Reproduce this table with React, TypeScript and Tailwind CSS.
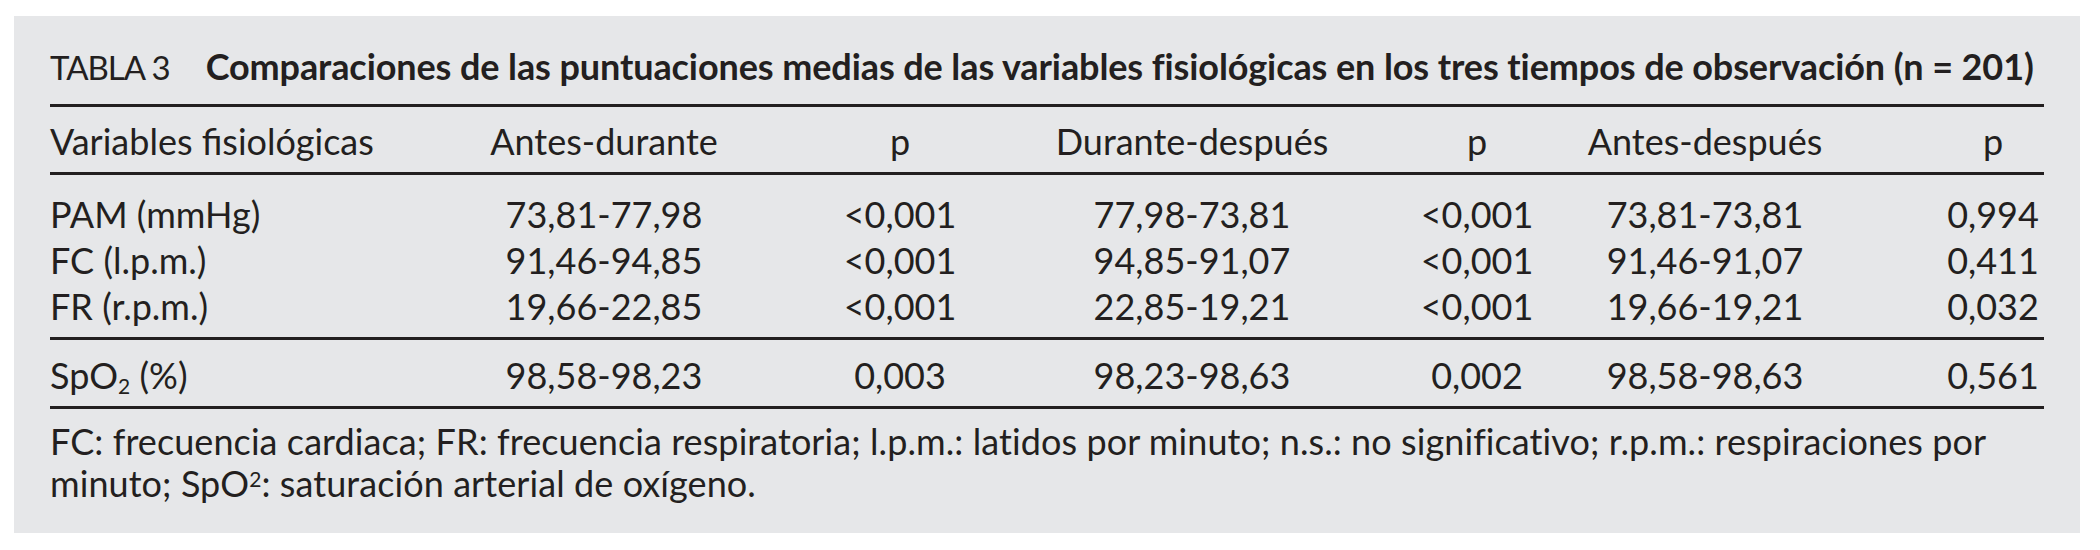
import React from "react";

const ink = "text-[#231f20]";

type Row = { name: React.ReactNode; cells: string[] };

const rows: Row[] = [
  { name: "PAM (mmHg)", cells: ["73,81-77,98", "<0,001", "77,98-73,81", "<0,001", "73,81-73,81", "0,994"] },
  { name: "FC (l.p.m.)", cells: ["91,46-94,85", "<0,001", "94,85-91,07", "<0,001", "91,46-91,07", "0,411"] },
  { name: "FR (r.p.m.)", cells: ["19,66-22,85", "<0,001", "22,85-19,21", "<0,001", "19,66-19,21", "0,032"] },
];

const spo2: Row = {
  name: (
    <>
      SpO<sub className="text-[21px]">2</sub> (%)
    </>
  ),
  cells: ["98,58-98,23", "0,003", "98,23-98,63", "0,002", "98,58-98,63", "0,561"],
};

const headers = ["Antes-durante", "p", "Durante-después", "p", "Antes-después", "p"];

const grid = "grid grid-cols-[406px_296px_296px_288px_282px_324px_102px]";

const Cells = ({ cells }: { cells: string[] }) => (
  <>
    {cells.map((c, i) => (
      <div key={i} className={`flex justify-center whitespace-nowrap ${i === 4 ? "pr-[150px]" : ""}`}>
        {c}
      </div>
    ))}
  </>
);

const Rule = ({ className = "" }: { className?: string }) => (
  <div className={`h-[3px] bg-[#231f20] ${className}`} />
);

export default function App() {
  return (
    <div className="min-h-screen bg-white pt-[16px] pl-[14px]">
      <div
        className={`w-[2066px] h-[517px] bg-[#e6e7e9] px-[36px] pt-[30px] ${ink} text-[36px]`}
        style={{ fontFamily: "Lato, 'Open Sans', sans-serif" }}
      >
        <div className="flex items-baseline whitespace-nowrap leading-[40px]">
          <span className="text-[33px] tracking-[-1px]">TABLA 3</span>
          <span className="ml-[36px] font-bold tracking-[-0.1px]">
            Comparaciones de las puntuaciones medias de las variables fisiológicas en los tres tiempos de observación (n = 201)
          </span>
        </div>
        <Rule className="mt-[17px]" />

        <div className={`${grid} mt-[14px] leading-[40px]`}>
          <div className="whitespace-nowrap">Variables fisiológicas</div>
          <Cells cells={headers} />
        </div>
        <Rule className="mt-[11px]" />

        <div className="mt-[16px] leading-[46px]">
          {rows.map((r, i) => (
            <div key={i} className={grid}>
              <div className="whitespace-nowrap">{r.name}</div>
              <Cells cells={r.cells} />
            </div>
          ))}
        </div>
        <Rule className="mt-[8px]" />

        <div className={`${grid} mt-[12px] leading-[46px]`}>
          <div className="whitespace-nowrap">{spo2.name}</div>
          <Cells cells={spo2.cells} />
        </div>
        <Rule className="mt-[8px]" />

        <p className="mt-[11px] leading-[42px] whitespace-nowrap tracking-[0.08px]">
          FC: frecuencia cardiaca; FR: frecuencia respiratoria; l.p.m.: latidos por minuto; n.s.: no significativo; r.p.m.: respiraciones por
          <br />
          minuto; SpO<sup className="text-[21px]">2</sup>: saturación arterial de oxígeno.
        </p>
      </div>
    </div>
  );
}
